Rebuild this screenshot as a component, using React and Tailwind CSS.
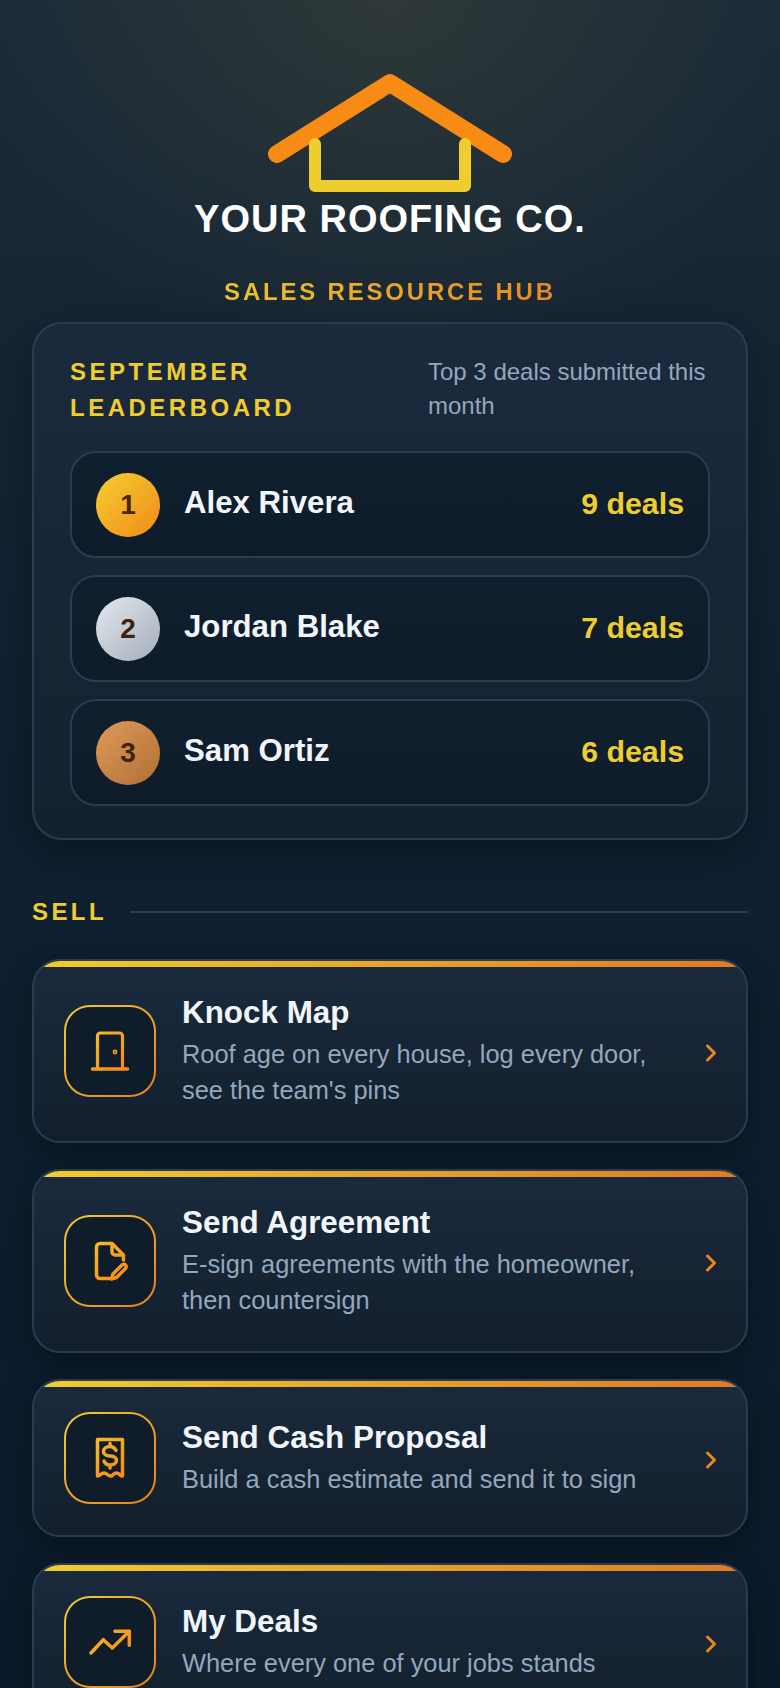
const LEADERS = [
  { rank: 1, name: 'Alex Rivera', deals: '9 deals', medal: 'bg-[linear-gradient(135deg,#f5cf2f,#f08a1a)]', num: 'text-[#4a2508]' },
  { rank: 2, name: 'Jordan Blake', deals: '7 deals', medal: 'bg-[linear-gradient(135deg,#e4e8ee,#a4adbb)]', num: 'text-[#3a2412]' },
  { rank: 3, name: 'Sam Ortiz', deals: '6 deals', medal: 'bg-[linear-gradient(135deg,#e09a5a,#b06f35)]', num: 'text-[#3f210c]' },
];

function IconFrame({ id, width = 3.5, children }) {
  return (
    <svg width="48" height="48" viewBox="0 0 48 48" fill="none" stroke={`url(#${id})`} strokeWidth={width} strokeLinecap="round" strokeLinejoin="round">
      <defs>
        <linearGradient id={id} gradientUnits="userSpaceOnUse" x1="6" y1="6" x2="42" y2="42">
          <stop offset="0" stopColor="#f6bd24" />
          <stop offset="1" stopColor="#f5861a" />
        </linearGradient>
      </defs>
      {children}
    </svg>
  );
}

function DoorIcon() {
  return (
    <IconFrame id="door" width={3.2}>
      <path d="M11.5 42V9a3 3 0 0 1 3-3h19a3 3 0 0 1 3 3v33" />
      <path d="M6.5 42H41.5" strokeWidth="3.6" />
      <circle cx="29" cy="25" r="0.8" />
    </IconFrame>
  );
}

function AgreementIcon() {
  return (
    <IconFrame id="agreement">
      <path d="M24 41.5H14a3.5 3.5 0 0 1-3.5-3.5V10a3.5 3.5 0 0 1 3.5-3.5h12L37.5 18v5" />
      <path d="M26 7v8a3 3 0 0 0 3 3h8" />
      <path d="M36 28l-9 9-1.5 5 5-1.5 9-9a2.4 2.4 0 0 0-3.5-3.5z" />
    </IconFrame>
  );
}

function ReceiptIcon() {
  return (
    <IconFrame id="receipt">
      <path d="M11.5 42V5.5h25V42c-2.5 0-3-3-6-3s-3.5 3-6 3-3.5-3-6.5-3-4 3-6.5 3z" />
      <path d="M24 9.5v3M24 31v3M30 16.5c-1-2-3.5-4-6-4-3.5 0-6.5 2-6.5 5s3 4.5 6.5 4.5 6.5 1.5 6.5 4.5-3 4.5-6.5 4.5c-2.5 0-5-1.5-6-4" />
    </IconFrame>
  );
}

function TrendIcon() {
  return (
    <IconFrame id="trend">
      <path d="M5 35l12.3-13.3 9 8.3 17-16.7" />
      <path d="M29 13.3h14.3v14" />
    </IconFrame>
  );
}

const TOOLS = [
  { title: 'Knock Map', desc: "Roof age on every house, log every door, see the team's pins", Icon: DoorIcon },
  { title: 'Send Agreement', desc: 'E-sign agreements with the homeowner, then countersign', Icon: AgreementIcon },
  { title: 'Send Cash Proposal', desc: 'Build a cash estimate and send it to sign', Icon: ReceiptIcon },
  { title: 'My Deals', desc: 'Where every one of your jobs stands', Icon: TrendIcon },
];

function Logo() {
  return (
    <svg width="260" height="140" viewBox="0 0 260 140" fill="none" strokeLinecap="round" strokeLinejoin="round" className="block">
      <path d="M17 94L130 23L243 94" stroke="#f78b14" strokeWidth="18" />
      <path d="M55 84V126H205V84" stroke="#f0cd2e" strokeWidth="12" />
    </svg>
  );
}

function LeaderRow({ rank, name, deals, medal, num }) {
  return (
    <div className="flex h-[107px] items-center rounded-[26px] border-2 border-[#283c52] bg-[linear-gradient(180deg,#101f2e,#0e1c2a)] px-6">
      <div className={`flex h-16 w-16 shrink-0 items-center justify-center rounded-full text-[28px] font-bold ${medal} ${num}`}>
        {rank}
      </div>
      <div className="ml-6 -mt-[3px] flex-1 text-[31.2px] font-bold text-[#f1f6fc]">{name}</div>
      <div className="-mt-[2px] text-[30.3px] font-bold text-[#f0cd2e]">{deals}</div>
    </div>
  );
}

function ToolCard({ title, desc, Icon }) {
  return (
    <div className="relative flex items-center overflow-hidden rounded-[28px] border-2 border-[#283c52] bg-[linear-gradient(180deg,#1a2a3d,#131f2d)] py-[31px] pl-[30px] pr-[28px] shadow-[0_10px_30px_rgba(0,0,0,0.3)]">
      <div className="absolute inset-x-0 top-0 h-[6px] bg-[linear-gradient(90deg,#f0cd2e,#e07a24)]" />
      <div className="flex h-[92px] w-[92px] shrink-0 items-center justify-center rounded-[26px] border-2 border-transparent [background:linear-gradient(#0f1c2a,#0f1c2a)_padding-box,linear-gradient(135deg,#f0cd2e,#e8801c)_border-box]">
        <Icon />
      </div>
      <div className="ml-[26px] min-w-0 flex-1 pr-5 pb-[2px]">
        <div className="text-[31.4px] leading-[41px] font-bold text-[#f1f6fc]">{title}</div>
        <div className="mt-[4px] text-[25.4px] leading-[35.56px] text-[#93a7bd]">{desc}</div>
      </div>
      <svg width="14" height="20" viewBox="0 0 14 20" fill="none" stroke="#e8861f" strokeWidth="3" strokeLinecap="round" strokeLinejoin="round" className="mt-[3px] shrink-0">
        <path d="M3.5 3l7 7-7 7" />
      </svg>
    </div>
  );
}

export default function App() {
  return (
    <div className="h-[1688px] overflow-hidden bg-[radial-gradient(ellipse_430px_380px_at_50%_0%,rgba(240,200,60,0.09),transparent),linear-gradient(180deg,#1b2a38_0%,#0f2030_45%,#0b1a2a_100%)] px-[32px] font-['Liberation_Sans',Arial,sans-serif]">
      <header className="flex flex-col items-center pt-[60px]">
        <Logo />
        <h1 className="mt-[-3px] text-[38px] leading-[44px] font-bold tracking-[1px] text-white">YOUR ROOFING CO.</h1>
        <div className="mt-[37px] bg-[linear-gradient(90deg,#eac52a,#e8881f)] bg-clip-text text-[24px] leading-[28px] font-bold tracking-[2.8px] text-transparent">
          SALES RESOURCE HUB
        </div>
      </header>

      <section className="mt-[16px] rounded-[30px] border-2 border-[#283c52] bg-[linear-gradient(180deg,#1a2a3d,#14212f)] px-[36px] pt-[30px] pb-[32px] shadow-[0_10px_40px_rgba(0,0,0,0.3)]">
        <div className="flex justify-between">
          <h2 className="w-[300px] text-[24px] leading-[36px] font-bold tracking-[3.5px] text-[#f0cd2e]">SEPTEMBER LEADERBOARD</h2>
          <p className="mt-[1px] w-[282px] text-[24px] leading-[34px] text-[#93a7bd]">Top 3 deals submitted this month</p>
        </div>
        <div className="mt-[25px] flex flex-col gap-[17px]">
          {LEADERS.map((l) => (
            <LeaderRow key={l.rank} {...l} />
          ))}
        </div>
      </section>

      <div className="mt-[58px] flex items-center gap-[23px]">
        <span className="text-[24px] leading-[28px] font-bold tracking-[3.4px] text-[#f0cd2e]">SELL</span>
        <div className="h-[2px] flex-1 bg-[#283c52]" />
      </div>

      <div className="mt-[33px] flex flex-col gap-[26px]">
        {TOOLS.map((t) => (
          <ToolCard key={t.title} {...t} />
        ))}
      </div>
    </div>
  );
}
